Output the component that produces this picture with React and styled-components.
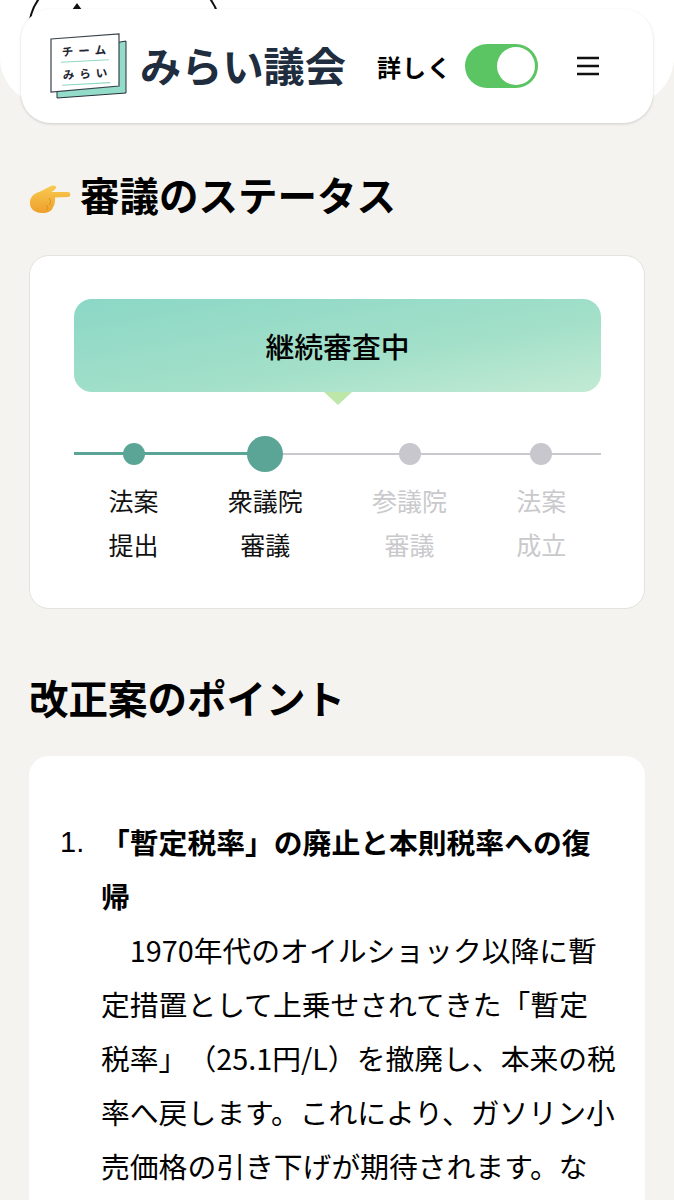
import styled, { createGlobalStyle } from "styled-components";

const GlobalStyle = createGlobalStyle`
  html, body {
    margin: 0;
    padding: 0;
    background: #f5f3ef;
    font-family: "Noto Sans CJK JP", "Noto Sans", sans-serif;
    color: #000;
  }
  * {
    box-sizing: border-box;
  }
`;

const Page = styled.div`
  position: relative;
  width: 674px;
  height: 1200px;
  overflow: hidden;
  background: #f5f3ef;
`;

const HeroBack = styled.div`
  position: absolute;
  top: -60px;
  left: 0;
  right: 0;
  height: 165px;
  background: #fff;
  border-radius: 0 0 48px 48px;
`;

const HeroPill = styled.div`
  position: absolute;
  top: -25px;
  left: 28px;
  width: 193px;
  height: 110px;
  border: 2px solid #111;
  border-radius: 55px;
`;

const HeroMark = styled.div`
  position: absolute;
  top: 3px;
  left: 72px;
  width: 0;
  height: 0;
  border-left: 5px solid transparent;
  border-right: 5px solid transparent;
  border-bottom: 7px solid #111;
`;

const Content = styled.div`
  position: relative;
  padding: 9px 21px 0;
`;

const Header = styled.header`
  display: flex;
  align-items: center;
  height: 114px;
  padding: 0 53px 0 28px;
  background: #fff;
  border-radius: 30px;
  box-shadow: 0 1px 3px rgba(0, 0, 0, 0.16);
`;

const Logo = styled.svg`
  width: 80px;
  height: 66px;
  flex-shrink: 0;
`;

const LogoText = styled.text`
  font-family: "Noto Sans CJK JP", sans-serif;
  font-size: 11.5px;
  font-weight: 700;
  fill: #1d2530;
  letter-spacing: 5px;
  text-anchor: middle;
`;

const Brand = styled.div`
  margin: -2px 0 0 11px;
  font-size: 41.2px;
  font-weight: 700;
  line-height: 1;
  color: #202d3e;
  white-space: nowrap;
`;

const ToggleLabel = styled.div`
  margin-left: 31px;
  font-size: 24px;
  font-weight: 700;
  letter-spacing: 1px;
  white-space: nowrap;
`;

const Toggle = styled.div`
  display: flex;
  align-items: center;
  justify-content: flex-end;
  width: 73px;
  height: 44px;
  margin-left: 13px;
  padding: 0 3px;
  background: #5bc463;
  border-radius: 22px;
`;

const Knob = styled.div`
  width: 38px;
  height: 38px;
  background: #fff;
  border-radius: 50%;
`;

const Menu = styled.svg`
  width: 24px;
  height: 20px;
  margin-left: auto;
  flex-shrink: 0;
`;

const Main = styled.main`
  padding: 0 8px;
`;

const Heading = styled.h2`
  display: flex;
  align-items: center;
  gap: 9px;
  height: 56px;
  margin: 43px 0 33px;
  font-size: 39.5px;
  font-weight: 700;
  line-height: 1;
  white-space: nowrap;
`;

const Hand = styled.svg`
  width: 42px;
  height: 32px;
  margin-top: 10px;
  flex-shrink: 0;
`;

const StatusCard = styled.section`
  height: 354px;
  padding: 43px 43px 0 44px;
  background: #fff;
  border: 1px solid #e3e2df;
  border-radius: 20px;
`;

const Bubble = styled.div`
  position: relative;
  display: flex;
  align-items: center;
  justify-content: center;
  height: 93px;
  font-size: 28.8px;
  font-weight: 500;
  border-radius: 18px;
  background: linear-gradient(170deg, #8bd7c6 0%, #a3e0c9 60%, #c3ead4 100%);

  &::after {
    content: "";
    position: absolute;
    left: 50%;
    bottom: -13px;
    margin-left: -14px;
    border-left: 14px solid transparent;
    border-right: 14px solid transparent;
    border-top: 13px solid #bde7a9;
  }
`;

const Steps = styled.div`
  position: relative;
  display: flex;
  justify-content: space-around;
  margin-top: 44px;

  &::before {
    content: "";
    position: absolute;
    top: 17px;
    left: 0;
    right: 0;
    height: 2px;
    background: #c9c8cd;
  }

  &::after {
    content: "";
    position: absolute;
    top: 16px;
    left: 0;
    width: 190px;
    height: 3px;
    background: #5aa596;
  }
`;

const Step = styled.div`
  position: relative;
  z-index: 1;
  display: flex;
  flex-direction: column;
  align-items: center;
  font-size: 25px;
  line-height: 44px;
  text-align: center;
  white-space: nowrap;
  color: ${(p) => (p.$done ? "#111" : "#c9c9cc")};
`;

const DotSlot = styled.div`
  display: flex;
  align-items: center;
  justify-content: center;
  height: 36px;
  margin-bottom: 6px;
`;

const Dot = styled.div`
  width: ${(p) => (p.$current ? "36px" : "22px")};
  height: ${(p) => (p.$current ? "36px" : "22px")};
  border-radius: 50%;
  background: ${(p) => (p.$done ? "#5aa596" : "#c8c7cd")};
`;

const PointsHeading = styled(Heading)`
  margin: 60px 0 31px;
`;

const PointsCard = styled.section`
  min-height: 500px;
  padding: 59px 24px 0 31px;
  background: #fff;
  border-radius: 20px;
`;

const List = styled.ol`
  margin: 0;
  padding: 0;
  list-style: none;
  font-size: 28.8px;
  line-height: 54px;
  text-spacing-trim: space-all;
`;

const Item = styled.li`
  display: flex;
`;

const Num = styled.span`
  flex: 0 0 41px;
  font-family: "Liberation Sans", sans-serif;
  font-size: 29px;
`;

const ItemText = styled.div`
  flex: 1;
`;

const Strong = styled.strong`
  display: block;
  font-weight: 700;
`;

const Body = styled.span`
  display: block;
  text-indent: 1em;
`;

const steps = [
  { lines: ["法案", "提出"], done: true },
  { lines: ["衆議院", "審議"], done: true, current: true },
  { lines: ["参議院", "審議"] },
  { lines: ["法案", "成立"] },
];

const LogoMark = () => (
  <Logo viewBox="0 0 80 66">
    <polygon
      points="8,20 77,8 77,60 8,65"
      fill="#92dcc9"
      stroke="#26303a"
      strokeWidth="1"
    />
    <polygon
      points="2,6 70,1 70,53 2,59"
      fill="#fff"
      stroke="#3a424c"
      strokeWidth="1.200"
    />
    <g transform="rotate(-3 36 30)">
      <LogoText x="38" y="22">チーム</LogoText>
      <line x1="12" y1="28" x2="60" y2="28" stroke="#8fd8c5" strokeWidth="1.200" />
      <LogoText x="38" y="45">みらい</LogoText>
      <line x1="12" y1="51" x2="60" y2="51" stroke="#8fd8c5" strokeWidth="1.200" />
    </g>
  </Logo>
);

const HandIcon = () => (
  <Hand viewBox="0 0 42 32">
    <defs>
      <linearGradient id="handFill" x1="0" y1="0" x2="0" y2="1">
        <stop offset="0" stopColor="#f8cb52" />
        <stop offset="1" stopColor="#ee9f2a" />
      </linearGradient>
    </defs>
    <path
      d="M1 18C2 13 6 10 10 9L22 3C25 1.500 28 3 27 5C26.500 6.500 24 8 22 9L39 9C42 9 42 14 39 14L26 14.500C26 18 26 22 24 24C23 28 19 30 13 30C6 30 0 26 1 18Z"
      fill="url(#handFill)"
    />
    <path
      d="M20 15C22 17 22 20 20.500 22M17 22C19 23 19 25 18 27"
      fill="none"
      stroke="#d08a20"
      strokeWidth="0.800"
    />
  </Hand>
);

const App = () => {
  return (
    <Page>
      <GlobalStyle />
      <HeroBack />
      <HeroPill />
      <HeroMark />
      <Content>
        <Header>
          <LogoMark />
          <Brand>みらい議会</Brand>
          <ToggleLabel>詳しく</ToggleLabel>
          <Toggle>
            <Knob />
          </Toggle>
          <Menu viewBox="0 0 24 20">
            <path d="M1 2h22M1 10h22M1 18h22" stroke="#111" strokeWidth="2.400" />
          </Menu>
        </Header>
        <Main>
          <Heading>
            <HandIcon />
            審議のステータス
          </Heading>
          <StatusCard>
            <Bubble>継続審査中</Bubble>
            <Steps>
              {steps.map((s) => (
                <Step key={s.lines.join("")} $done={s.done}>
                  <DotSlot>
                    <Dot $done={s.done} $current={s.current} />
                  </DotSlot>
                  <span>{s.lines[0]}</span>
                  <span>{s.lines[1]}</span>
                </Step>
              ))}
            </Steps>
          </StatusCard>
          <PointsHeading>改正案のポイント</PointsHeading>
          <PointsCard>
            <List>
              <Item>
                <Num>1.</Num>
                <ItemText>
                  <Strong>
                    「暫定税率」の廃止と本則税率への復
                    <br />
                    帰
                  </Strong>
                  <Body>
                    1970年代のオイルショック以降に暫定措置として上乗せされてきた「暫定
                    <br />
                    税率」（25.1円/L）を撤廃し、本来の税率へ戻します。これにより、ガソリン小売価格の引き下げが期待されます。な
                  </Body>
                </ItemText>
              </Item>
            </List>
          </PointsCard>
        </Main>
      </Content>
    </Page>
  );
};

export default App;
